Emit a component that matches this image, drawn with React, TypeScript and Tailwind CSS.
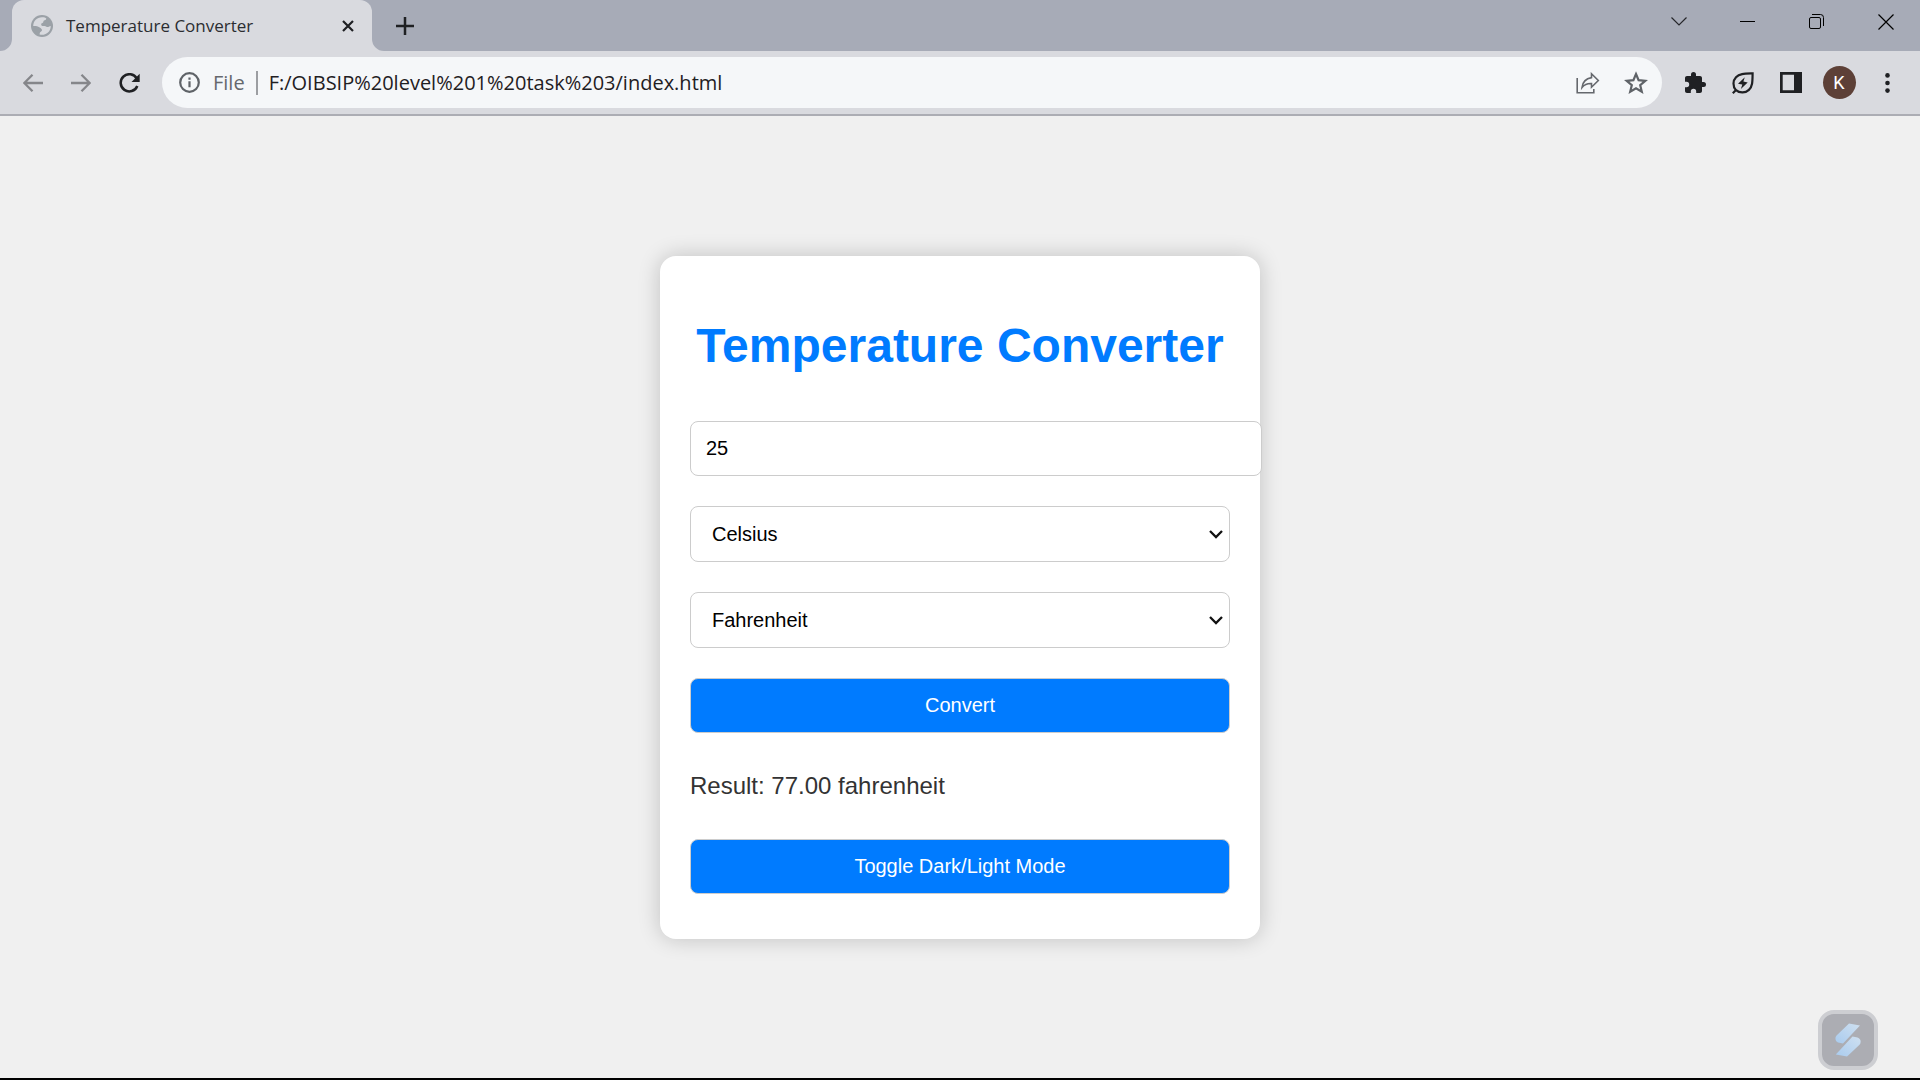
import React, { useState } from "react";

const ui = "font-['Open_Sans','Noto_Sans',sans-serif]";
const iconBtn = "flex h-12 w-12 shrink-0 items-center justify-center";

const units = ["Celsius", "Fahrenheit", "Kelvin"];

function toCelsius(v: number, unit: string) {
  if (unit === "Fahrenheit") return ((v - 32) * 5) / 9;
  if (unit === "Kelvin") return v - 273.15;
  return v;
}

function fromCelsius(v: number, unit: string) {
  if (unit === "Fahrenheit") return (v * 9) / 5 + 32;
  if (unit === "Kelvin") return v + 273.15;
  return v;
}

function TabStrip() {
  return (
    <div className="flex h-[51px] items-stretch bg-[#a7abb7]">
      <div className="flex w-3 items-end overflow-hidden">
        <svg width="12" height="12" viewBox="0 0 12 12" aria-hidden="true">
          <path d="M12 0v12H0A12 12 0 0 0 12 0z" fill="#d9dadf" />
        </svg>
      </div>
      <div className="flex w-[360px] items-center rounded-t-xl bg-[#d9dadf] pr-3 pl-[19px]">
        <svg width="22" height="22" viewBox="0 0 22 22" aria-hidden="true" className="shrink-0">
          <circle cx="11" cy="11" r="11" fill="#9ba1a7" />
          <path
            d="M11 2.200C13.500 2.200 14.500 2.800 15.300 3.400c-.2 1.600-1.500 1.600-2.300 2.200-.9.700-.3 2-1.500 2.300-1.200.3-1.500.9-1.200 2.100.3 1.200 1.800.9 3.200 1 1.500.1 2 1.200 3 1.100 1-.1 2.200-1.100 3.300-1.100A8.800 8.800 0 0 1 8.600 19.500c.2-1.200 0-2 1.200-2.700 1.300-.7 1.500-1.800.7-2.800C9.500 12.600 7.500 11.500 5 11H2.200C2.200 6 6 2.200 11 2.200z"
            fill="#d9dadf"
          />
        </svg>
        <span className={`${ui} ml-[13px] flex-1 text-[17px] leading-6 whitespace-nowrap text-[#2b2d31]`}>
          Temperature Converter
        </span>
        <button aria-label="Close tab" className="flex h-6 w-6 items-center justify-center">
          <svg width="12" height="12" viewBox="0 0 12 12" stroke="#1f2023" strokeWidth="2.200">
            <path d="M1 1l10 10M11 1L1 11" />
          </svg>
        </button>
      </div>
      <div className="flex w-3 items-end overflow-hidden">
        <svg width="12" height="12" viewBox="0 0 12 12" aria-hidden="true">
          <path d="M0 0v12h12A12 12 0 0 1 0 0z" fill="#d9dadf" />
        </svg>
      </div>
      <button aria-label="New tab" className="flex w-[42px] items-center justify-center">
        <svg width="18" height="18" viewBox="0 0 18 18" stroke="#1f2023" strokeWidth="2.500">
          <path d="M9 0v18M0 9h18" />
        </svg>
      </button>
      <div className="flex flex-1 justify-end pb-2">
        <button aria-label="Search tabs" className="flex w-[69px] items-center justify-center">
          <svg width="16" height="9" viewBox="0 0 16 9" fill="none" stroke="#26272b" strokeWidth="1.200">
            <path d="M.5.5L8 8l7.500-7.500" />
          </svg>
        </button>
        <button aria-label="Minimize" className="flex w-[69px] items-center justify-center">
          <svg width="15" height="1" viewBox="0 0 15 1">
            <rect width="15" height="1" fill="#000" />
          </svg>
        </button>
        <button aria-label="Restore" className="flex w-[69px] items-center justify-center">
          <svg width="15" height="15" viewBox="0 0 15 15" fill="none" stroke="#000">
            <rect x=".5" y="3.500" width="11" height="11" rx="1.500" />
            <path d="M3 .5h8.500a3 3 0 0 1 3 3V12" />
          </svg>
        </button>
        <button aria-label="Close window" className="flex w-[69px] items-center justify-center">
          <svg width="16" height="16" viewBox="0 0 16 16" stroke="#000" strokeWidth="1.200">
            <path d="M.5.5l15 15M15.500.5l-15 15" />
          </svg>
        </button>
      </div>
    </div>
  );
}

function Toolbar() {
  return (
    <div className="flex h-[65px] items-center border-b-2 border-[#acadb4] bg-[#d9dadf] pr-[9px] pl-[9px]">
      <button aria-label="Back" className={iconBtn}>
        <svg width="20" height="18" viewBox="0 0 20 18" fill="none" stroke="#85868a" strokeWidth="2.300">
          <path d="M20 9H1.500M9.500.8L1.300 9l8.200 8.200" />
        </svg>
      </button>
      <button aria-label="Forward" className={iconBtn}>
        <svg width="20" height="18" viewBox="0 0 20 18" fill="none" stroke="#85868a" strokeWidth="2.300">
          <path d="M0 9h18.500M10.500.8L18.700 9l-8.200 8.200" />
        </svg>
      </button>
      <button aria-label="Reload" className={iconBtn}>
        <svg width="21" height="20" viewBox="0 0 21 20" fill="none">
          <path d="M17.800 5.600A8.600 8.600 0 1 0 18.300 13" stroke="#1f2023" strokeWidth="2.500" />
          <path d="M20.700.8v8.200h-8.200z" fill="#1f2023" />
        </svg>
      </button>
      <div className="ml-[9px] flex h-[51px] flex-1 items-center rounded-full bg-[#f5f7f9] pr-0.5 pl-[17px]">
        <button aria-label="View site information">
          <svg width="21" height="21" viewBox="0 0 21 21" fill="none">
            <circle cx="10.500" cy="10.500" r="9.300" stroke="#5f6368" strokeWidth="2.200" />
            <path d="M10.500 9.300v6M10.500 5.500v2.200" stroke="#5f6368" strokeWidth="2.200" />
          </svg>
        </button>
        <span className={`${ui} ml-[13px] text-[20px] leading-6 text-[#65686d]`}>File</span>
        <span className="mx-[11px] h-6 w-0.5 bg-[#9c9ea2]" />
        <input
          aria-label="Address"
          defaultValue="F:/OIBSIP%20level%201%20task%203/index.html"
          className={`${ui} min-w-0 flex-1 bg-transparent text-[20px] leading-6 text-[#1f2023] outline-none`}
        />
        <button aria-label="Share" className={iconBtn}>
          <svg width="24" height="22" viewBox="0 0 24 22" fill="none" stroke="#65686d" strokeWidth="1.600">
            <path d="M1.200 6v14.800h16.600V17" />
            <path d="M15.500 1.800L22.300 8.500l-6.800 6.700V11.500C11.500 11.300 8.500 12.400 6 15.500 6.600 10.500 9.500 6.500 15.500 5.600z" />
          </svg>
        </button>
        <button aria-label="Bookmark" className={iconBtn}>
          <svg width="24" height="24" viewBox="0 0 24 24" fill="none" stroke="#5f6368" strokeWidth="2.200">
            <path d="M12 3l2.600 6.200 6.700.6-5.100 4.400 1.600 6.600L12 17.300l-5.800 3.500 1.600-6.600-5.100-4.400 6.700-.6z" />
          </svg>
        </button>
      </div>
      <button aria-label="Extensions" className={`${iconBtn} ml-[9px]`}>
        <svg width="24" height="24" viewBox="0 0 24 24" fill="#1f2023">
          <path d="M20.500 11H19V7c0-1.100-.9-2-2-2h-4V3.500a2.500 2.500 0 0 0-5 0V5H4c-1.100 0-2 .9-2 2v3.800h1.500a2.700 2.700 0 0 1 0 5.400H2V20c0 1.100.9 2 2 2h3.800v-1.500a2.700 2.700 0 0 1 5.400 0V22H17c1.100 0 2-.9 2-2v-4h1.500a2.500 2.500 0 0 0 0-5z" />
        </svg>
      </button>
      <button aria-label="Energy saver" className={iconBtn}>
        <svg width="22" height="22" viewBox="0 0 22 22" fill="none" stroke="#1f2023">
          <path
            d="M4 18.200C.5 14.500.8 8.500 4 5.200 7.500 1.500 12.500 1.600 20.600 1.400c-.1 8.100 0 13.100-3.700 16.500-3.300 3.200-9.200 3.500-12.900.3zM4.500 17.500L.8 21.200"
            strokeWidth="2.200"
          />
          <path d="M12.800 5.200L6 11.700l4.300.8-1.400 4.600 6.800-6.600-4.300-.9z" fill="#1f2023" stroke="none" />
        </svg>
      </button>
      <button aria-label="Side panel" className={iconBtn}>
        <svg width="22" height="21" viewBox="0 0 22 21">
          <path d="M0 0h22v21H0zM2.700 2.700v15.600H14V2.700z" fill="#1f2023" fillRule="evenodd" />
        </svg>
      </button>
      <button aria-label="Profile" className={iconBtn}>
        <span className="flex h-[33px] w-[33px] items-center justify-center rounded-full bg-[#5d4037] font-['Roboto',sans-serif] text-[18px] text-white">
          K
        </span>
      </button>
      <button aria-label="Menu" className={iconBtn}>
        <svg width="5" height="20" viewBox="0 0 5 20" fill="#1f2023">
          <circle cx="2.500" cy="2.400" r="2.300" />
          <circle cx="2.500" cy="10" r="2.300" />
          <circle cx="2.500" cy="17.600" r="2.300" />
        </svg>
      </button>
    </div>
  );
}

function UnitSelect(props: { label: string; value: string; onChange: (v: string) => void }) {
  return (
    <div className="relative mb-[30px]">
      <select
        aria-label={props.label}
        value={props.value}
        onChange={(e) => props.onChange(e.target.value)}
        className="block h-14 w-full appearance-none rounded-lg border border-[#ccc] bg-white px-[21px] text-[20px] text-black"
      >
        {units.map((u) => (
          <option key={u}>{u}</option>
        ))}
      </select>
      <svg
        width="14"
        height="10"
        viewBox="0 0 14 10"
        fill="none"
        stroke="#111"
        strokeWidth="2.300"
        aria-hidden="true"
        className="pointer-events-none absolute top-1/2 right-[7px] -translate-y-1/2"
      >
        <path d="M1 2l6 6 6-6" />
      </svg>
    </div>
  );
}

export default function App() {
  const [value, setValue] = useState("25");
  const [from, setFrom] = useState("Celsius");
  const [to, setTo] = useState("Fahrenheit");
  const [result, setResult] = useState("Result: 77.00 fahrenheit");
  const [dark, setDark] = useState(false);

  const convert = () =>
    setResult(`Result: ${fromCelsius(toCelsius(Number(value), from), to).toFixed(2)} ${to.toLowerCase()}`);

  const action = "block h-[55px] w-full rounded-lg border border-[#ccc] bg-[#007bff] text-[20px] text-white";

  return (
    <div className="flex min-h-screen flex-col border-b-2 border-black">
      <header>
        <TabStrip />
        <Toolbar />
      </header>
      <main
        className={`flex flex-1 items-center justify-center font-['Liberation_Sans',Arial,sans-serif] ${
          dark ? "bg-[#333]" : "bg-[#f0f0f0]"
        }`}
      >
        <section className="w-[600px] rounded-2xl bg-white px-[30px] pt-[60px] pb-[45px] text-[#333] shadow-[0_0_22px_rgba(0,0,0,0.2)]">
          <h1 className="mb-[45px] text-center text-[48px] leading-[60px] font-bold whitespace-nowrap text-[#007bff]">
            Temperature Converter
          </h1>
          <input
            aria-label="Temperature"
            value={value}
            onChange={(e) => setValue(e.target.value)}
            className="mb-[30px] block h-[55px] w-[calc(100%+32px)] rounded-lg border border-[#ccc] bg-white px-[15px] text-[20px] text-black"
          />
          <UnitSelect label="From unit" value={from} onChange={setFrom} />
          <UnitSelect label="To unit" value={to} onChange={setTo} />
          <button onClick={convert} className={action}>
            Convert
          </button>
          <p className="my-[38px] text-[24px] leading-[30px]">{result}</p>
          <button onClick={() => setDark(!dark)} className={action}>
            Toggle Dark/Light Mode
          </button>
        </section>
      </main>
      <button
        aria-label="Assistant"
        className="fixed right-[42px] bottom-2.5 flex h-[60px] w-[60px] items-center justify-center rounded-2xl border-4 border-[#cdced2] bg-[#acadb3]"
      >
        <svg width="26" height="34" viewBox="0 0 26 34">
          <defs>
            <linearGradient id="blade" x1="0" y1="1" x2="1" y2="0">
              <stop offset="0" stopColor="#a9cbee" />
              <stop offset="1" stopColor="#cfe0f0" />
            </linearGradient>
          </defs>
          <path d="M14 .5L25 2.500 8 20.500 3 19.500C.3 18.500-.5 14.500 1.800 12.300z" fill="url(#blade)" />
          <path d="M12 33.500L.8 31.500 17.500 13.500 22.500 14.500c3.500 1 4 5 2 7.200z" fill="url(#blade)" />
        </svg>
      </button>
    </div>
  );
}
